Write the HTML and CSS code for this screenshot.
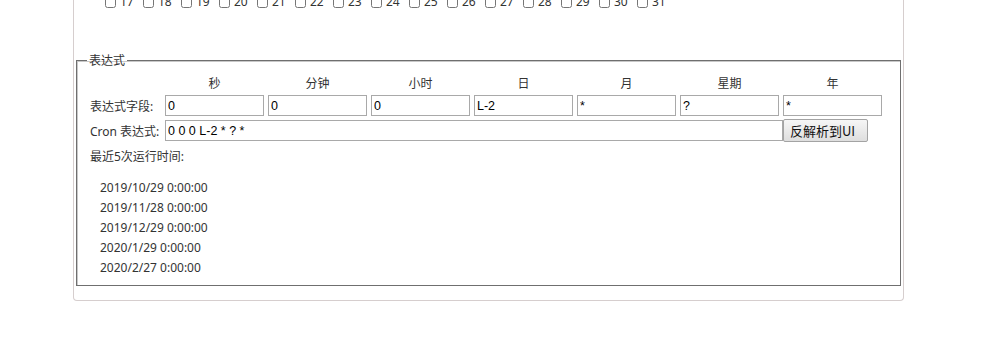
FILE: index.html
```html
<!DOCTYPE html>
<html lang="zh-CN">
<head>
    <meta charset="UTF-8">
    <meta name="viewport" content="width=device-width, initial-scale=1.0">
    <title>Cron 表达式</title>
    <link rel="stylesheet" href="styles.css">
</head>
<body>
    <div class="panel">
        <div class="days" id="days"></div>

        <fieldset class="expr">
            <legend>表达式</legend>
            <div class="expr-grid">
                <span></span>
                <span class="head">秒</span>
                <span class="head">分钟</span>
                <span class="head">小时</span>
                <span class="head">日</span>
                <span class="head">月</span>
                <span class="head">星期</span>
                <span class="head">年</span>

                <span class="label">表达式字段:</span>
                <input class="field" type="text" value="0">
                <input class="field" type="text" value="0">
                <input class="field" type="text" value="0">
                <input class="field" type="text" value="L-2">
                <input class="field" type="text" value="*">
                <input class="field" type="text" value="?">
                <input class="field" type="text" value="*">

                <span class="label">Cron 表达式:</span>
                <div class="cron-line">
                    <input class="cron" id="cron" type="text" value="0 0 0 L-2 * ? *">
                    <button class="parse-btn">反解析到UI</button>
                </div>
            </div>
            <div class="recent">最近5次运行时间:</div>
            <ul class="runs">
                <li>2019/10/29 0:00:00</li>
                <li>2019/11/28 0:00:00</li>
                <li>2019/12/29 0:00:00</li>
                <li>2020/1/29 0:00:00</li>
                <li>2020/2/27 0:00:00</li>
            </ul>
        </fieldset>
    </div>
    <script>
        // day checkboxes, only the tail of the list is visible
        let days = document.getElementById("days");
        for (let d = 17; d <= 31; d++) {
            let item = document.createElement("label");
            item.classList.add("day");
            let box = document.createElement("input");
            box.type = "checkbox";
            item.appendChild(box);
            item.appendChild(document.createTextNode(d));
            days.appendChild(item);
        }
    </script>
</body>
</html>
```

FILE: styles.css
```css
body {
    margin: 0;
    background: #fff;
    font-family: "Noto Sans", "Noto Sans CJK SC", sans-serif;
    font-size: 12px;
    color: #333;
}
.panel {
    width: 825px;
    margin: -6px 0 0 73px;
    padding: 0 2px 14px;
    border: 1px solid #d6cece;
    border-top: none;
    border-radius: 0 0 4px 4px;
}
.days {
    display: flex;
    height: 16px;
    line-height: 16px;
    padding-left: 29px;
}
.day {
    display: flex;
    align-items: center;
    gap: 4px;
    width: 38px;
}
.day input {
    width: 11px;
    height: 11px;
    margin: 0;
}
.expr {
    margin: 42px 0 0;
    padding: 7px 13px 7px 13px;
    border: 1px solid #6f6f6f;
    box-shadow: inset 1px 1px 0 #c8c8c8;
    min-width: 0;
}
.expr legend {
    padding: 0 2px;
    margin-left: -3px;
    line-height: 17px;
}
.expr-grid {
    display: grid;
    grid-template-columns: 71px repeat(7, 99px);
    grid-template-rows: 16px 21px 23px;
    column-gap: 4px;
    row-gap: 3px;
    align-items: center;
}
.head {
    text-align: center;
    line-height: 16px;
}
.label {
    white-space: nowrap;
}
.field, .cron {
    box-sizing: border-box;
    height: 21px;
    margin: 0;
    padding: 0 2px;
    border: 1px solid #a9a9a9;
    font-family: "Liberation Sans", Arial, sans-serif;
    font-size: 12.5px;
    color: #000;
    width: 99px;
}
.cron-line {
    grid-column: 2 / -1;
    display: flex;
    align-items: center;
}
.cron {
    width: 618px;
}
.parse-btn {
    box-sizing: border-box;
    width: 85px;
    height: 23px;
    margin: 0;
    padding: 0 6px;
    border: 1px solid #a3a3a3;
    border-radius: 2px;
    background: linear-gradient(#f6f6f6, #dedede);
    font-family: "Noto Sans CJK SC", sans-serif;
    font-size: 13px;
    color: #111;
    text-align: left;
    cursor: pointer;
}
.recent {
    margin-top: 6px;
    line-height: 18px;
}
.runs {
    list-style: none;
    margin: 12px 0 0;
    padding: 0 0 0 10px;
}
.runs li {
    line-height: 20px;
}
```
